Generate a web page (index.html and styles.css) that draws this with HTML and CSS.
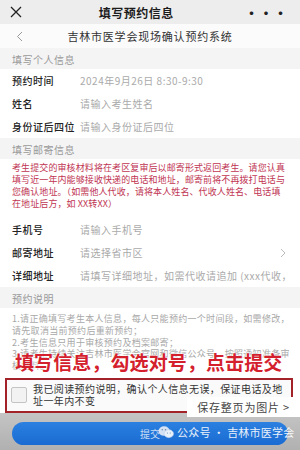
FILE: index.html
```html
<!DOCTYPE html>
<html lang="zh-CN">
<head>
  <meta charset="UTF-8" />
  <meta name="viewport" content="width=device-width, initial-scale=1.0" />
  <title>填写预约信息</title>
  <link rel="stylesheet" href="styles.css">
</head>
<body>

  <header class="topbar">
    <svg class="close-icon" width="12" height="12" viewBox="0 0 12 12"><path d="M1 1L11 11M11 1L1 11" stroke="#222" stroke-width="1.3" fill="none"/></svg>
    <span class="topbar-title">填写预约信息</span>
    <span class="more">&middot;&middot;&middot;</span>
  </header>

  <nav class="navbar">
    <svg class="back-icon" width="7" height="11" viewBox="0 0 7 11"><path d="M6 1L1.5 5.5L6 10" stroke="#999" stroke-width="1" fill="none"/></svg>
    <span class="navbar-title">吉林市医学会现场确认预约系统</span>
  </nav>

  <main class="page">
    <div class="section-title">填写个人信息</div>
    <div class="form-row"><span class="label">预约时间</span><span class="value">2024年9月26日 8:30-9:30</span></div>
    <div class="form-row"><span class="label">姓名</span><span class="value">请输入考生姓名</span></div>
    <div class="form-row"><span class="label">身份证后四位</span><span class="value">请输入身份证后四位</span></div>

    <div class="section-title">填写邮寄信息</div>
    <p class="notice">考生提交的审核材料将在考区复审后以邮寄形式返回考生。请您认真填写近一年内能够接收快递的电话和地址，邮寄前将不再拨打电话与您确认地址。（如需他人代收，请将本人姓名、代收人姓名、电话填在地址后方，如 XX转XX）</p>
    <div class="form-row"><span class="label">手机号</span><span class="value">请输入手机号</span></div>
    <div class="form-row"><span class="label">邮寄地址</span><span class="value">请选择省市区</span>
      <svg class="arrow" width="6" height="10" viewBox="0 0 6 10"><path d="M1 1L5 5L1 9" stroke="#bbb" stroke-width="1" fill="none"/></svg>
    </div>
    <div class="form-row"><span class="label">详细地址</span><span class="value">请填写详细地址，如需代收请追加 (xxx代收，</span></div>

    <div class="section-title">预约说明</div>
    <div class="rules">
      <p>1.请正确填写考生本人信息，每人只能预约一个时间段，如需修改，请先取消当前预约后重新预约；</p>
      <p>2.考生信息只用于审核预约及档案邮寄；</p>
      <p>3.请考生持续关注吉林市医学会官网和微信公众号，按照通知准备审核材料。</p>
    </div>

    <label class="agree">
      <span class="checkbox"></span>
      <span class="agree-text">我已阅读预约说明，确认个人信息无误，保证电话及地址一年内不变</span>
    </label>

    <div class="annotation">填写信息，勾选对号，点击提交</div>
    <div class="save-tip">保存整页为图片 &gt;</div>
  </main>

  <footer class="bottom">
    <button class="submit">提交</button>
    <div class="watermark">
      <svg width="16" height="14" viewBox="0 0 17 14">
        <ellipse cx="6.5" cy="6" rx="6" ry="5" fill="#e8eef8"/>
        <ellipse cx="11.5" cy="8.8" rx="5" ry="4.2" fill="#fff" stroke="#c9d6ea" stroke-width="0.6"/>
        <circle cx="4.5" cy="4.6" r="0.8" fill="#7a8aa3"/>
        <circle cx="8" cy="4.6" r="0.8" fill="#7a8aa3"/>
        <circle cx="10" cy="8" r="0.6" fill="#7a8aa3"/>
        <circle cx="13" cy="8" r="0.6" fill="#7a8aa3"/>
      </svg>
      <span>公众号 · 吉林市医学会</span>
    </div>
  </footer>

</body>
</html>
```

FILE: styles.css
```css
body {
  margin: 0;
  width: 300px;
  height: 450px;
  overflow: hidden;
  font-family: "Noto Sans CJK SC", "Noto Sans", sans-serif;
  background: #bcbcbc;
  position: relative;
}

p {
  margin: 0;
}

.topbar {
  height: 24px;
  background: #ededed;
  display: flex;
  align-items: center;
  padding: 0 12px 0 10px;
  justify-content: space-between;
}

.topbar-title {
  font-size: 12px;
  font-weight: bold;
  letter-spacing: 0.5px;
  color: #1c1c1c;
  margin-left: 6px;
}

.more {
  font-size: 14px;
  font-weight: bold;
  letter-spacing: 0.5px;
  color: #222;
  line-height: 1;
}

.navbar {
  height: 24px;
  background: #fbfbfb;
  display: flex;
  align-items: center;
  padding-left: 16px;
}

.navbar-title {
  flex: 1;
  text-align: center;
  font-size: 11px;
  letter-spacing: 0.8px;
  color: #333;
  margin-right: 23px;
}

.page {
  background: #fff;
}

.section-title {
  height: 21px;
  box-sizing: border-box;
  padding: 2px 12px 0;
  line-height: 19px;
  background: #f4f4f4;
  font-size: 10px;
  letter-spacing: 0.5px;
  color: #999;
}

.form-row {
  height: 23px;
  display: flex;
  align-items: center;
  padding: 0 14px 0 12px;
  font-size: 10px;
  letter-spacing: 0.5px;
}

.label {
  width: 68px;
  flex: none;
  color: #222;
  font-weight: 500;
}

.value {
  flex: 1;
  min-width: 0;
  color: #aaa;
  white-space: nowrap;
  overflow: hidden;
}

.arrow {
  flex: none;
}

.notice {
  padding: 3px 12px 8px;
  font-size: 9px;
  letter-spacing: 0.1px;
  line-height: 12px;
  color: #c03452;
}

.rules {
  padding: 5px 6px 6px 12px;
  height: 59px;
  overflow: hidden;
  font-size: 9px;
  letter-spacing: 0.3px;
  line-height: 11.8px;
  color: #a8a8a8;
}

.agree {
  display: flex;
  align-items: center;
  gap: 6px;
  margin: 0 7px 0 5px;
  padding: 3px 6px 4px 4px;
  border: 2px solid #a3222a;
  background: #fafafa;
}

.checkbox {
  flex: none;
  width: 14px;
  height: 14px;
  border: 1px solid #c4c4c4;
  border-radius: 2px;
  background: #f2f2f2;
}

.agree-text {
  font-size: 10px;
  letter-spacing: 0.4px;
  line-height: 12px;
  color: #333;
}

.annotation {
  position: absolute;
  left: 15px;
  top: 350px;
  font-size: 19px;
  font-weight: bold;
  line-height: 24px;
  letter-spacing: 0.1px;
  color: #d4202c;
  text-shadow: 0 0 2px #fff, 0 0 2px #fff;
}

.save-tip {
  position: absolute;
  left: 187px;
  top: 397px;
  width: 103px;
  height: 20px;
  padding-right: 10px;
  text-align: right;
  line-height: 20px;
  background: #fff;
  font-size: 11px;
  letter-spacing: 0.8px;
  color: #444;
}

.bottom {
  height: 39px;
  padding: 9px 12px 0;
  background: linear-gradient(#c4c4c4, #ababab);
}

.submit {
  display: block;
  width: 100%;
  height: 23px;
  border: none;
  border-radius: 12px;
  background: linear-gradient(#2b80e0, #1a6bd2);
  color: rgba(255, 255, 255, 0.75);
  font-family: inherit;
  font-size: 10px;
  text-align: left;
  padding-left: 128px;
}

.watermark {
  position: absolute;
  left: 158px;
  top: 424px;
  display: flex;
  align-items: center;
  gap: 3px;
  color: #fff;
  font-size: 11px;
  letter-spacing: 0.2px;
  line-height: 16px;
  opacity: 0.9;
}
```
